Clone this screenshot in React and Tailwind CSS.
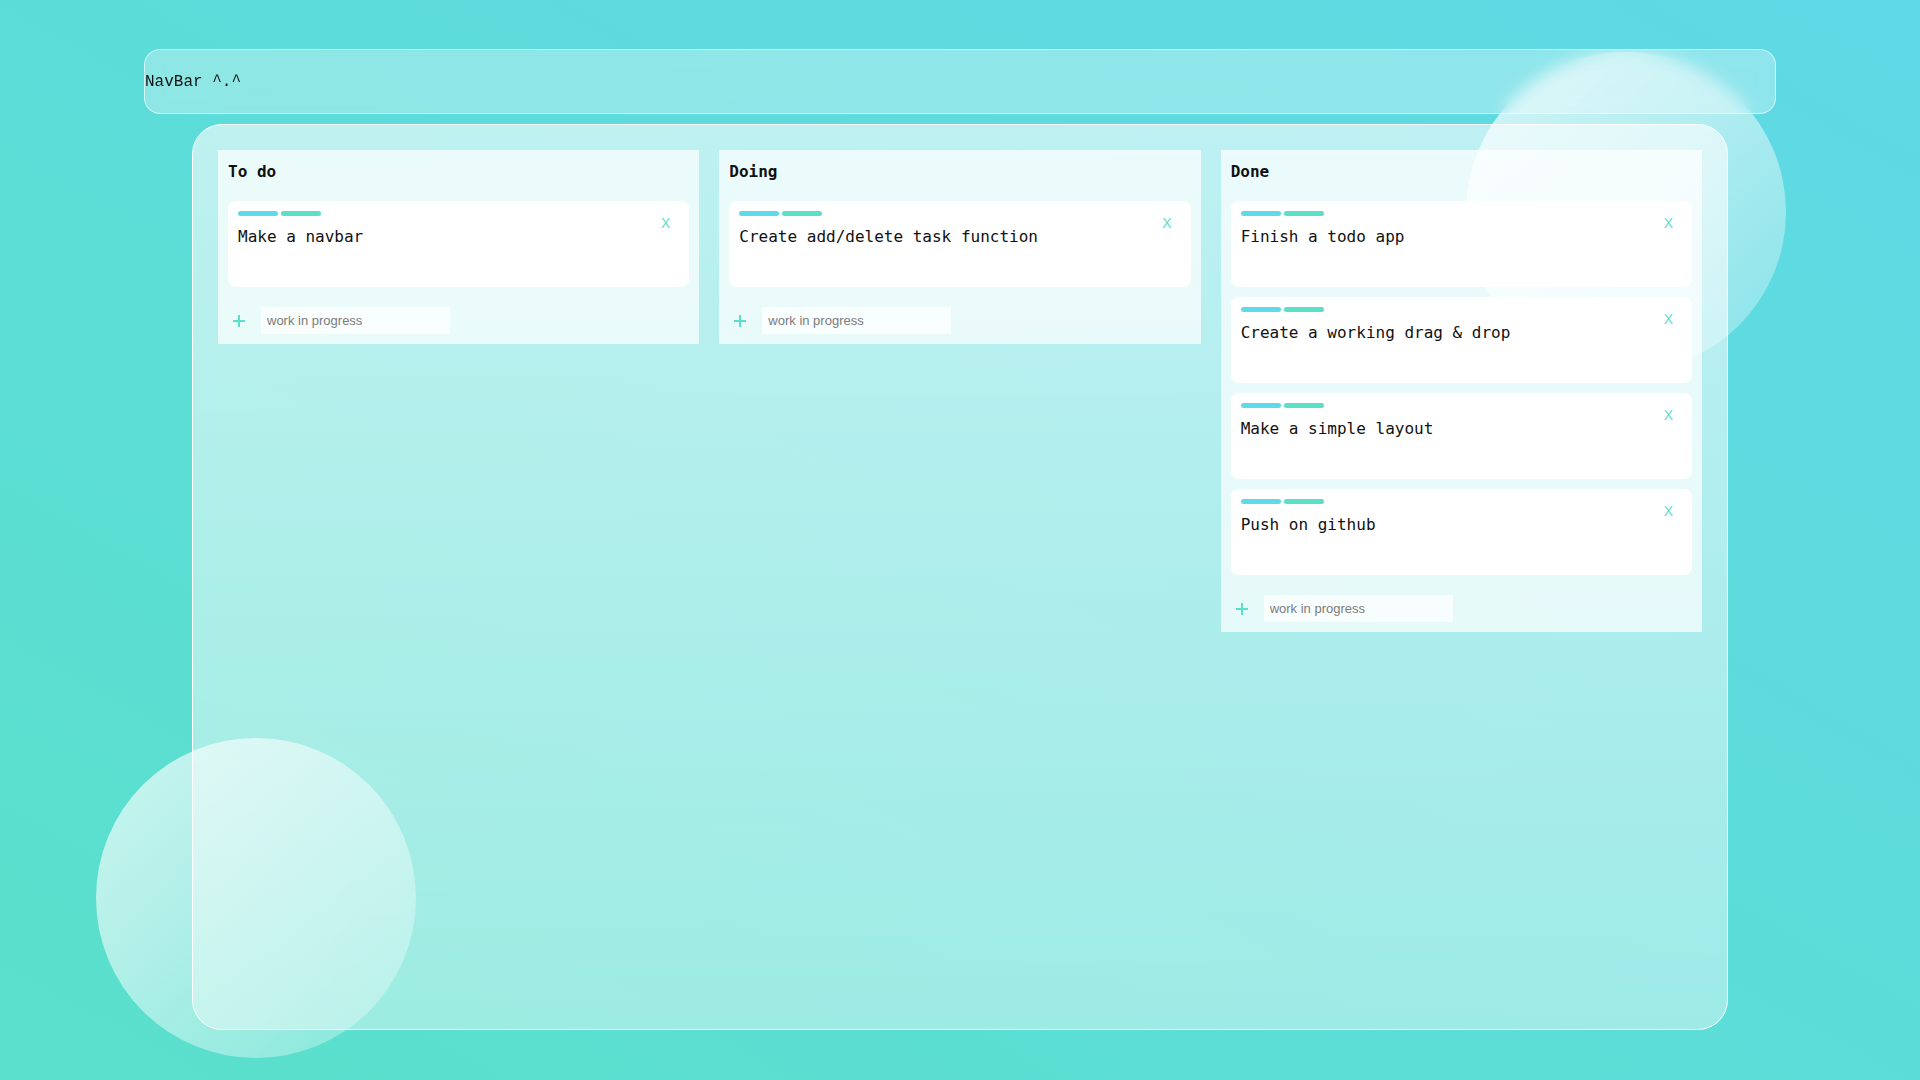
import React from "react";

const columns = [
  { title: "To do", tasks: ["Make a navbar"] },
  { title: "Doing", tasks: ["Create add/delete task function"] },
  {
    title: "Done",
    tasks: [
      "Finish a todo app",
      "Create a working drag & drop",
      "Make a simple layout",
      "Push on github",
    ],
  },
];

function TaskCard({ text }) {
  return (
    <div className="relative h-[86px] rounded-lg bg-white px-[10px] pt-[10px]">
      {/* color tags */}
      <div className="flex gap-[3px]">
        <span className="h-[5px] w-10 rounded-full bg-[#5ddbe8]" />
        <span className="h-[5px] w-10 rounded-full bg-[#5ae0c8]" />
      </div>
      <p className="mt-[9px] text-[16px] leading-6 text-[#111]">{text}</p>
      <button className="absolute right-[19px] top-[15px] text-[14px] leading-none text-[#5ae0c8] font-['Liberation_Sans',sans-serif]">
        X
      </button>
    </div>
  );
}

function Column({ title, tasks }) {
  return (
    <div className="bg-white/70 p-[10px]">
      <h2 className="mb-[17px] text-[16px] font-bold leading-6 text-[#111]">{title}</h2>
      <div className="flex flex-col gap-[10px]">
        {tasks.map((t) => (
          <TaskCard key={t} text={t} />
        ))}
      </div>
      <div className="mt-[20px] flex items-center">
        <svg width="14" height="14" viewBox="0 0 14 14" className="ml-[4px] mr-[15px]">
          <path d="M7 1v12M1 7h12" stroke="#5ae0c8" strokeWidth="2" />
        </svg>
        <input
          placeholder="work in progress"
          className="h-[27px] w-[189px] bg-white/70 px-[6px] text-[13px] text-[#333] placeholder:text-[#7b7b7b] outline-none font-['Liberation_Sans',Arial,sans-serif]"
        />
      </div>
    </div>
  );
}

export default function App() {
  return (
    <div className="relative h-[1080px] w-full overflow-hidden bg-gradient-to-tr from-[#5ae0cb] to-[#5fd9e6] font-['DejaVu_Sans_Mono',monospace]">
      {/* decorative circles */}
      <div className="absolute left-[1466px] top-[52px] h-[320px] w-[320px] rounded-full bg-gradient-to-br from-white/75 to-white/25" />
      <div className="absolute left-[96px] top-[738px] h-[320px] w-[320px] rounded-full bg-gradient-to-br from-white/70 to-white/25" />

      <div className="relative flex flex-col items-center pt-[49px]">
        {/* navbar */}
        <nav className="flex h-[65px] w-[1632px] items-center rounded-2xl border border-white/60 bg-white/30 backdrop-blur-sm">
          <span className="text-[16px] text-[#111] font-['Liberation_Mono',monospace]">NavBar ^.^</span>
        </nav>

        {/* board */}
        <main className="mt-[10px] h-[906px] w-[1536px] rounded-[30px] border border-white bg-gradient-to-b from-white/60 to-white/40">
          <div className="grid grid-cols-3 items-start gap-5 p-[25px]">
            {columns.map((c) => (
              <Column key={c.title} title={c.title} tasks={c.tasks} />
            ))}
          </div>
        </main>
      </div>
    </div>
  );
}
